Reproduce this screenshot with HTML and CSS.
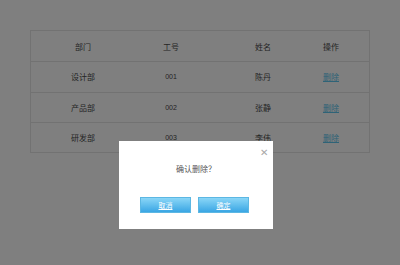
FILE: index.html
```html
<!DOCTYPE html>
<html lang="zh-CN">
<head>
    <meta charset="UTF-8">
    <meta name="viewport" content="width=device-width, initial-scale=1.0">
    <title>员工列表</title>
    <link rel="stylesheet" href="styles.css">
</head>
<body>

<div class="page">
    <div class="staff-table">
        <div class="row head">
            <div class="cell">部门</div>
            <div class="cell">工号</div>
            <div class="cell">姓名</div>
            <div class="cell op">操作</div>
        </div>
        <div class="row">
            <div class="cell">设计部</div>
            <div class="cell num">001</div>
            <div class="cell">陈丹</div>
            <div class="cell op"><a href="#">删除</a></div>
        </div>
        <div class="row">
            <div class="cell">产品部</div>
            <div class="cell num">002</div>
            <div class="cell">张静</div>
            <div class="cell op"><a href="#">删除</a></div>
        </div>
        <div class="row">
            <div class="cell">研发部</div>
            <div class="cell num">003</div>
            <div class="cell">李伟</div>
            <div class="cell op"><a href="#">删除</a></div>
        </div>
    </div>
</div>

<div class="mask"></div>

<div class="dialog">
    <span class="close">&#x2715;</span>
    <p class="message">确认删除？</p>
    <div class="actions">
        <a href="#" class="btn">取消</a>
        <a href="#" class="btn">确定</a>
    </div>
</div>

</body>
</html>
```

FILE: styles.css
```css
body {
    margin: 0;
    font-family: "Noto Sans CJK SC", "Liberation Sans", sans-serif;
    font-size: 8px;
    color: #4a4a4a;
    background-color: #fff;
}
.page {
    padding: 30px;
}
.staff-table {
    width: 340px;
    border: 1px solid #e4e4e4;
    box-sizing: border-box;
}
.row {
    display: grid;
    grid-template-columns: 104px 72px 112px 1fr;
    height: 30.3px;
    align-items: center;
    border-top: 1px solid #e4e4e4;
    box-sizing: border-box;
}
.row.head {
    border-top: none;
}
.cell {
    text-align: center;
}
.cell.num {
    font-family: "Liberation Sans", sans-serif;
    font-size: 7px;
}
.cell.op {
    text-align: left;
    padding-left: 4px;
}
.cell a {
    color: #5cc6ee;
}
.mask {
    position: fixed;
    top: 0;
    left: 0;
    right: 0;
    bottom: 0;
    background-color: rgba(0, 0, 0, 0.5);
}
.dialog {
    position: absolute;
    left: 119px;
    top: 141px;
    width: 154px;
    height: 88px;
    background-color: #fff;
    display: flex;
    flex-direction: column;
    align-items: center;
}
.close {
    position: absolute;
    top: 3px;
    right: 5px;
    font-size: 10px;
    color: #a8a8a8;
}
.message {
    margin: 23px 0 0 0;
    line-height: 10px;
    font-size: 8px;
    color: #555;
}
.actions {
    display: flex;
    gap: 7px;
    margin-top: 23px;
    margin-left: -3px;
}
.btn {
    display: flex;
    justify-content: center;
    align-items: center;
    width: 51px;
    height: 16px;
    box-sizing: border-box;
    border: 1px solid #5cb7e3;
    background: linear-gradient(#8ad6f7, #3aa6e4);
    color: #fff;
    font-size: 7px;
}
```
